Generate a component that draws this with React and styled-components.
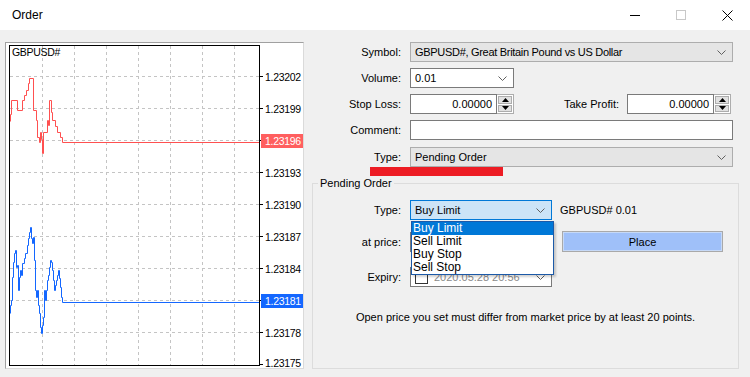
import React from "react";
import styled, { createGlobalStyle } from "styled-components";

const UI_FONT = `"Liberation Sans", Arial, sans-serif`;

const GlobalStyle = createGlobalStyle`
  html, body { margin: 0; padding: 0; background: #f0f0f0; }
  body { font-family: ${UI_FONT}; font-size: 11px; color: #000; }
`;

const Window = styled.div`
  width: 750px;
  height: 377px;
  display: flex;
  flex-direction: column;
  background: #f0f0f0;
  overflow: hidden;
`;

const TitleBar = styled.div`
  height: 30px;
  flex: none;
  background: #fff;
  display: flex;
  align-items: center;
`;

const Title = styled.div`
  flex: 1;
  padding-left: 12px;
  font-size: 12px;
`;

const CaptionButton = styled.div`
  width: 46px;
  height: 30px;
  display: flex;
  align-items: center;
  justify-content: center;
`;

const Body = styled.div`
  flex: 1;
  display: flex;
  gap: 8px;
  padding: 12px 11px 8px 5px;
`;

const ChartFrame = styled.div`
  width: 297px;
  height: 325px;
  flex: none;
  background: #fff;
  border: 1px solid;
  border-color: #a0a0a0 #dadada #dadada #a0a0a0;
  svg { display: block; }
`;

const FormPanel = styled.div`
  flex: 1;
  display: flex;
  flex-direction: column;
`;

const Fields = styled.div`
  display: flex;
  flex-direction: column;
  gap: 6px;
  padding-right: 6px;
`;

const Row = styled.div`
  position: relative;
  display: flex;
  align-items: center;
  height: ${(p) => p.$h || 20}px;
  margin-top: ${(p) => p.$mt || 0}px;
`;

const Label = styled.div`
  width: ${(p) => p.$w || 89}px;
  flex: none;
  text-align: right;
  padding-right: 9px;
  box-sizing: content-box;
  white-space: nowrap;
`;

const FlexLabel = styled(Label)`
  flex: 1;
  width: auto;
  padding-right: 8px;
`;

const Combo = styled.div`
  position: relative;
  box-sizing: border-box;
  height: 20px;
  width: ${(p) => (p.$w ? `${p.$w}px` : "auto")};
  flex: ${(p) => (p.$w ? "none" : "1")};
  display: flex;
  align-items: center;
  padding: 0 6px 0 4px;
  background: ${(p) => (p.$variant === "gray" ? "#e5e5e5" : p.$variant === "focus" ? "#cce4f7" : "#fff")};
  border: 1px solid ${(p) => (p.$variant === "focus" ? "#0078d7" : p.$variant === "gray" ? "#adadad" : "#7a7a7a")};
  white-space: nowrap;
`;

const ComboText = styled.span`
  flex: 1;
  overflow: hidden;
  letter-spacing: ${(p) => (p.$tight ? "-0.3px" : "0")};
  color: ${(p) => (p.$muted ? "#8a8a8a" : "#000")};
`;

const TextBox = styled.div`
  box-sizing: border-box;
  height: 20px;
  flex: ${(p) => (p.$w ? "none" : "1")};
  width: ${(p) => (p.$w ? `${p.$w}px` : "auto")};
  background: #fff;
  border: 1px solid #7a7a7a;
  display: flex;
  align-items: center;
  justify-content: flex-end;
  padding-right: 4px;
`;

const Spin = styled.div`
  display: flex;
  flex: none;
  width: ${(p) => p.$w}px;
  margin-right: ${(p) => p.$mr || 0}px;
`;

const SpinButtons = styled.div`
  width: 17px;
  height: 20px;
  box-sizing: border-box;
  border: 1px solid #adadad;
  border-left: none;
  display: flex;
  flex-direction: column;
  background: #fff;
  padding: 1px;
  gap: 1px;
`;

const SpinHalf = styled.div`
  flex: 1;
  background: #e1e1e1;
  border: 1px solid #adadad;
  display: flex;
  align-items: center;
  justify-content: center;
`;

const Marker = styled.div`
  position: absolute;
  left: 58px;
  top: 20px;
  width: 133px;
  height: 9px;
  background: #ed1c24;
`;

const Group = styled.fieldset`
  margin: 8px 0 0 0;
  padding: 0;
  border: 1px solid #dcdcdc;
  flex: 1;
  min-width: 0;
  display: flex;
  flex-direction: column;
`;

const Legend = styled.legend`
  margin-left: 5px;
  padding: 0 2px;
  line-height: 16px;
`;

const GroupRows = styled.div`
  display: flex;
  flex-direction: column;
  padding-top: 9px;
`;

const SideText = styled.div`
  margin-left: 8px;
`;

const PlaceButton = styled.div`
  margin-left: 10px;
  width: 161px;
  height: 21px;
  box-sizing: border-box;
  border: 1px solid #a9a9a9;
  background: #9fc0f9;
  box-shadow: inset 0 0 0 1px #c6d9f7;
  display: flex;
  align-items: center;
  justify-content: center;
`;

const DropList = styled.div`
  position: absolute;
  left: 0;
  top: 20px;
  width: 143px;
  box-sizing: border-box;
  border: 1px solid #1c5aa8;
  background: #fff;
  box-shadow: 2px 2px 2px rgba(0, 0, 0, 0.18);
  z-index: 2;
  font-size: 12px;
`;

const DropItem = styled.div`
  height: 13px;
  line-height: 13px;
  padding-left: 1px;
  background: ${(p) => (p.$selected ? "#0078d7" : "transparent")};
  color: ${(p) => (p.$selected ? "#fff" : "#000")};
`;

const CheckBox = styled.div`
  width: 11px;
  height: 11px;
  border: 1px solid #333;
  margin-right: 6px;
  flex: none;
`;

const Note = styled.div`
  margin-top: 24px;
  text-align: center;
`;

const Chevron = () => (
  <svg width="9" height="5" viewBox="0 0 9 5">
    <path d="M0.5 0.5 L4.5 4.5 L8.5 0.5" fill="none" stroke="#606060" strokeWidth="1" />
  </svg>
);

const Tri = ({ down }) => (
  <svg width="7" height="4" viewBox="0 0 7 4">
    <path d={down ? "M0 0 H7 L3.5 4 Z" : "M0 4 H7 L3.5 0 Z"} fill="#000" />
  </svg>
);

const SpinBox = ({ w, mr, value }) => (
  <Spin $w={w} $mr={mr}>
    <TextBox>{value}</TextBox>
    <SpinButtons>
      <SpinHalf><Tri /></SpinHalf>
      <SpinHalf><Tri down /></SpinHalf>
    </SpinButtons>
  </Spin>
);

const RED = [
  [10, 121], [10, 114], [11, 114], [11, 100], [17, 100], [17, 110], [22, 110], [22, 100], [24, 100], [24, 95],
  [26, 95], [26, 90], [28, 90], [28, 83], [29, 83], [29, 78], [33, 78], [33, 110], [36, 110], [36, 120],
  [37, 120], [37, 137], [39, 137], [39, 142], [40, 142], [40, 132], [41, 132], [41, 139], [42, 139], [42, 153],
  [43, 153], [43, 132], [47, 132], [47, 120], [48, 120], [48, 125], [49, 125], [49, 100], [51, 100], [51, 112],
  [52, 112], [52, 120], [55, 120], [55, 126], [57, 126], [57, 132], [60, 132], [60, 137], [62, 137], [62, 142],
  [259, 142],
];

const BLUE = [
  [10, 313], [10, 305], [11, 305], [11, 300], [12, 300], [12, 277], [13, 277], [13, 262], [14, 262], [14, 253],
  [15, 253], [15, 250], [16, 250], [16, 267], [17, 267], [17, 265], [18, 265], [18, 290], [19, 290], [19, 277],
  [20, 277], [20, 270], [21, 270], [21, 275], [22, 275], [22, 263], [24, 263], [24, 258], [25, 258], [25, 253],
  [27, 253], [27, 245], [28, 245], [28, 238], [29, 238], [29, 232], [30, 232], [30, 227], [31, 227], [31, 238],
  [32, 238], [32, 243], [33, 243], [33, 237], [34, 237], [34, 260], [35, 260], [35, 290], [36, 290], [36, 297],
  [37, 297], [37, 290], [38, 290], [38, 305], [39, 305], [39, 313], [40, 313], [40, 327], [41, 327], [41, 333],
  [42, 333], [42, 325], [43, 325], [43, 317], [44, 317], [44, 290], [45, 290], [45, 300], [46, 300], [46, 290],
  [47, 290], [47, 280], [48, 280], [48, 275], [49, 275], [49, 267], [50, 267], [50, 260], [51, 260], [51, 262],
  [52, 262], [52, 270], [53, 270], [53, 280], [54, 280], [54, 290], [55, 290], [55, 285], [56, 285], [56, 280],
  [57, 280], [57, 275], [58, 275], [58, 270], [59, 270], [59, 278], [60, 278], [60, 287], [61, 287], [61, 297],
  [62, 297], [62, 302], [259, 302],
];

const LEVELS = [
  { y: 76, label: "1.23202" },
  { y: 108, label: "1.23199" },
  { y: 140, label: "1.23196", bg: "#ff5f5f" },
  { y: 172, label: "1.23193" },
  { y: 204, label: "1.23190" },
  { y: 236, label: "1.23187" },
  { y: 268, label: "1.23184" },
  { y: 300, label: "1.23181", bg: "#1467ff" },
  { y: 332, label: "1.23178" },
];

const VLINES = [42, 74, 106, 138, 170, 202, 234];

const pts = (arr) => arr.map(([x, y]) => `${x + 0.5},${y + 0.5}`).join(" ");

const Chart = () => (
  <svg width="297" height="325" viewBox="6 43 297 325" fontFamily={UI_FONT} fontSize="10.5">
    {VLINES.map((x) => (
      <line key={x} x1={x + 0.5} y1={46} x2={x + 0.5} y2={365} stroke="#c4c4c4" strokeDasharray="3 3" />
    ))}
    {LEVELS.map((l) => (
      <line key={l.y} x1={10} y1={l.y + 0.5} x2={259} y2={l.y + 0.5} stroke="#c4c4c4" strokeDasharray="3 3" />
    ))}
    <polyline points={pts(RED)} fill="none" stroke="#ff5050" strokeWidth="1" />
    <polyline points={pts(BLUE)} fill="none" stroke="#1467ff" strokeWidth="1" />
    <rect x="9.5" y="45.5" width="250" height="320" fill="none" stroke="#000" />
    {LEVELS.map((l) => (
      <g key={l.label}>
        <line x1={259} y1={l.y + 0.5} x2={263} y2={l.y + 0.5} stroke="#000" />
        {l.bg && <rect x="261" y={l.y - 6} width="42" height="14" fill={l.bg} />}
        <text x="265" y={l.y + 5} fill={l.bg ? "#fff" : "#000"} letterSpacing="-0.3">
          {l.label}
        </text>
      </g>
    ))}
    <line x1={259} y1={364.5} x2={263} y2={364.5} stroke="#000" />
    <text x="265" y="367" letterSpacing="-0.3">1.23175</text>
    <text x="12" y="56" letterSpacing="-0.3">GBPUSD#</text>
  </svg>
);

export default function App() {
  return (
    <Window>
      <GlobalStyle />
      <TitleBar>
        <Title>Order</Title>
        <CaptionButton>
          <svg width="10" height="1"><rect width="10" height="1" fill="#000" /></svg>
        </CaptionButton>
        <CaptionButton>
          <svg width="10" height="10"><rect x="0.5" y="0.5" width="9" height="9" fill="none" stroke="#c8c8c8" /></svg>
        </CaptionButton>
        <CaptionButton>
          <svg width="11" height="11"><path d="M0.5 0.5 L10.5 10.5 M10.5 0.5 L0.5 10.5" stroke="#000" /></svg>
        </CaptionButton>
      </TitleBar>
      <Body>
        <ChartFrame>
          <Chart />
        </ChartFrame>
        <FormPanel>
          <Fields>
            <Row>
              <Label>Symbol:</Label>
              <Combo $variant="gray">
                <ComboText $tight>GBPUSD#, Great Britain Pound vs US Dollar</ComboText>
                <Chevron />
              </Combo>
            </Row>
            <Row>
              <Label>Volume:</Label>
              <Combo $w={104}>
                <ComboText>0.01</ComboText>
                <Chevron />
              </Combo>
            </Row>
            <Row>
              <Label>Stop Loss:</Label>
              <SpinBox w={104} value="0.00000" />
              <FlexLabel>Take Profit:</FlexLabel>
              <SpinBox w={104} mr={2} value="0.00000" />
            </Row>
            <Row>
              <Label>Comment:</Label>
              <TextBox />
            </Row>
            <Row $mt={1}>
              <Label>Type:</Label>
              <Combo $variant="gray">
                <ComboText>Pending Order</ComboText>
                <Chevron />
              </Combo>
              <Marker />
            </Row>
          </Fields>
          <Group>
            <Legend>Pending Order</Legend>
            <GroupRows>
              <Row>
                <Label $w={88}>Type:</Label>
                <Combo $w={142} $variant="focus">
                  <ComboText>Buy Limit</ComboText>
                  <Chevron />
                  <DropList>
                    <DropItem $selected>Buy Limit</DropItem>
                    <DropItem>Sell Limit</DropItem>
                    <DropItem>Buy Stop</DropItem>
                    <DropItem>Sell Stop</DropItem>
                  </DropList>
                </Combo>
                <SideText>GBPUSD# 0.01</SideText>
              </Row>
              <Row $h={21} $mt={11}>
                <Label $w={88}>at price:</Label>
                <TextBox $w={142} />
                <PlaceButton>Place</PlaceButton>
              </Row>
              <Row $mt={15}>
                <Label $w={88}>Expiry:</Label>
                <Combo $w={142}>
                  <CheckBox />
                  <ComboText $muted>2020.05.28 20:56</ComboText>
                  <Chevron />
                </Combo>
              </Row>
              <Note>Open price you set must differ from market price by at least 20 points.</Note>
            </GroupRows>
          </Group>
        </FormPanel>
      </Body>
    </Window>
  );
}
